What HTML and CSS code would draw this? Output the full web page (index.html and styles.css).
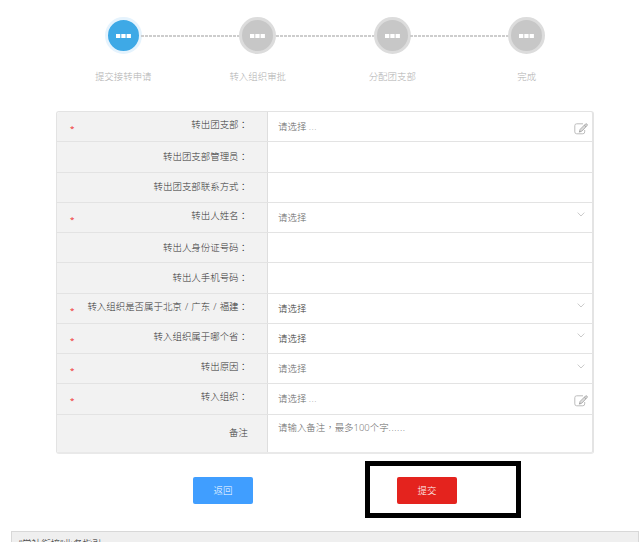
FILE: index.html
```html
<!DOCTYPE html>
<html lang="zh-CN">
<head>
<meta charset="utf-8">
<title>提交接转申请</title>
<link rel="stylesheet" href="styles.css">
</head>
<body>
<svg class="defs" aria-hidden="true">
  <symbol id="edit" viewBox="0 0 14 12">
    <path d="M9 .8H2.7Q.8.8.8 2.7v6.2q0 1.9 1.9 1.9h6.1q1.9 0 1.9-1.9V7" fill="none" stroke="#bdbdbd"/>
    <path d="M5.4 9.1l.7-2.7L11.4 1.1q.8-.7 1.6 0t0 1.6L7.9 8.1z" fill="#ddd" stroke="#aaa" stroke-width=".9"/>
    <path d="M10.3 2.2l1.7 1.6M5.4 9.1l1.1-1.2" stroke="#999" stroke-width=".8"/>
  </symbol>
  <symbol id="down" viewBox="0 0 8 5"><path d="M.7.6L4 4 7.3.6" fill="none" stroke="#c4c4c4" stroke-width=".9"/></symbol>
  <symbol id="dots" viewBox="0 0 15 4"><path d="M0 0h4.3v4H0zM5.3 0h4.3v4H5.3zM10.6 0h4.3v4h-4.3z" fill="#fff"/></symbol>
</svg>
<ol class="steps">
  <li class="step active"><span class="dot"><svg><use href="#dots"/></svg></span><span class="name">提交接转申请</span></li>
  <li class="step"><span class="dot"><svg><use href="#dots"/></svg></span><span class="name">转入组织审批</span></li>
  <li class="step"><span class="dot"><svg><use href="#dots"/></svg></span><span class="name">分配团支部</span></li>
  <li class="step"><span class="dot"><svg><use href="#dots"/></svg></span><span class="name">完成</span></li>
</ol>
<form class="form">
  <div class="row required"><div class="label"><b>*</b><span>转出团支部<i lang="zh-TW">：</i></span></div><div class="value"><span>请选择 <em>...</em></span><svg class="edit"><use href="#edit"/></svg></div></div>
  <div class="row"><div class="label"><span>转出团支部管理员<i lang="zh-TW">：</i></span></div><div class="value"></div></div>
  <div class="row"><div class="label"><span>转出团支部联系方式<i lang="zh-TW">：</i></span></div><div class="value"></div></div>
  <div class="row required"><div class="label"><b>*</b><span>转出人姓名<i lang="zh-TW">：</i></span></div><div class="value"><span>请选择</span><svg class="down"><use href="#down"/></svg></div></div>
  <div class="row"><div class="label"><span>转出人身份证号码<i lang="zh-TW">：</i></span></div><div class="value"></div></div>
  <div class="row"><div class="label"><span>转出人手机号码<i lang="zh-TW">：</i></span></div><div class="value"></div></div>
  <div class="row required"><div class="label"><b>*</b><span class="wide">转入组织是否属于北京 / 广东 / 福建<i lang="zh-TW">：</i></span></div><div class="value dark"><span>请选择</span><svg class="down"><use href="#down"/></svg></div></div>
  <div class="row required"><div class="label"><b>*</b><span>转入组织属于哪个省<i lang="zh-TW">：</i></span></div><div class="value dark"><span>请选择</span><svg class="down"><use href="#down"/></svg></div></div>
  <div class="row required"><div class="label"><b>*</b><span>转出原因<i lang="zh-TW">：</i></span></div><div class="value"><span>请选择</span><svg class="down"><use href="#down"/></svg></div></div>
  <div class="row required"><div class="label"><b>*</b><span>转入组织<i lang="zh-TW">：</i></span></div><div class="value"><span>请选择 <em>...</em></span><svg class="edit"><use href="#edit"/></svg></div></div>
  <div class="row remark"><div class="label"><span>备注</span></div><div class="value"><span>请输入备注<i lang="zh-TW">，</i>最多100个字<span class="ellipsis">......</span></span></div></div>
</form>
<div class="actions">
  <button class="btn back" type="button">返回</button>
  <div class="frame"><button class="btn submit" type="button">提交</button></div>
</div>
<section class="guide">“学社衔接”业务指引</section>
</body>
</html>
```
FILE: styles.css
```css
* { box-sizing: border-box; }
body {
  margin: 0;
  height: 542px;
  overflow: hidden;
  background: #fff;
  color: #333;
  font: 300 9.45px/14px "Open Sans", "Noto Sans CJK SC", sans-serif;
}
i { font-style: normal; font-family: "Noto Sans CJK TC", sans-serif; line-height: 1; }
.defs { position: absolute; width: 0; height: 0; }
.steps {
  display: flex;
  list-style: none;
  margin: 0 0 0 56px;
  padding: 17px 0 0;
  width: 538px;
  height: 111px;
}
.step {
  position: relative;
  flex: 1;
  display: flex;
  flex-direction: column;
  align-items: center;
  color: #b0b0b0;
}
.dot {
  display: flex;
  align-items: center;
  justify-content: center;
  width: 37px;
  height: 37px;
  border: 3px solid #dcdcdc;
  border-radius: 50%;
  background: #c7c7c7;
}
.active .dot { background: #3ea9e6; border-color: #e5f3fd; }
.dot svg { width: 15px; height: 4px; margin-top: 1px; }
.name { margin-top: 16px; }
.step:not(:last-child)::after {
  content: "";
  position: absolute;
  left: calc(50% + 18px);
  top: 18px;
  width: calc(100% - 36px);
  height: 2px;
  background: repeating-linear-gradient(90deg, #cdcdcd 0 3px, #fff 3px 4px);
}
.form {
  margin: 0 0 0 56px;
  width: 538px;
  height: 343px;
  border: 1px solid #e3e3e3;
  border-right: 2px solid #e4e4e4;
  border-bottom: 2px solid #e9e9e9;
  border-radius: 3px;
  display: grid;
  grid-template-rows: repeat(10, 30.25px) 1fr;
  overflow: hidden;
}
.row { display: grid; grid-template-columns: 211px 1fr; border-bottom: 1px solid #e3e3e3; }
.row:last-child { border-bottom: 0; }
.label {
  display: flex;
  align-items: center;
  justify-content: flex-end;
  padding: 0 19px 0 0;
  background: #f2f2f2;
  border-right: 1px solid #dedede;
}
.required .label span { margin-top: -3px; }
.label .wide { word-spacing: .7px; }
.label b { margin-right: auto; margin-left: 13px; padding-top: 3px; color: #f02020; font-size: 8px; font-weight: 400; }
.value {
  display: flex;
  align-items: center;
  justify-content: space-between;
  padding: 1px 4px 0 10px;
  color: #666;
}
.value em { font-style: normal; color: #999; letter-spacing: .5px; }
.value.dark { color: #333; }
.edit { width: 14px; height: 12px; margin-top: 4px; }
.down { width: 8px; height: 5px; margin: -6px 3px 0 0; }
.remark .value { align-items: flex-start; padding-top: 6px; }
.ellipsis { letter-spacing: .6px; }
.actions { display: flex; align-items: flex-start; padding: 7px 0 0 193px; height: 77px; }
.btn {
  display: block;
  width: 60px;
  height: 27px;
  padding: 0;
  border: 0;
  border-radius: 2px;
  color: #fff;
  font: inherit;
}
.back { margin-top: 16px; background: #409eff; }
.frame { margin-left: 112px; width: 156px; height: 57px; border: 5px solid #000; padding: 11px 0 0 27px; }
.submit { background: #e4231e; }
.guide {
  margin-left: 11px;
  width: 628px;
  height: 40px;
  border: 1px solid #d8d8d8;
  background: #efefef;
  padding: 5px 7px;
  color: #222;
  letter-spacing: .15px;
}
```
